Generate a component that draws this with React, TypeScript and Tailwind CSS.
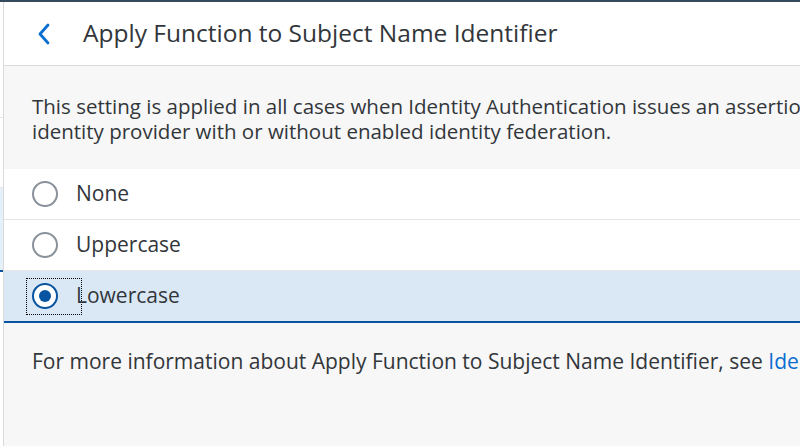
import React, { useState } from "react";

const options = ["None", "Uppercase", "Lowercase"];

function Radio({ checked }: { checked: boolean }) {
  return (
    <span
      className={`flex h-[26px] w-[26px] items-center justify-center rounded-full border-2 bg-white ${
        checked ? "border-[#0854a0]" : "border-[#89919a]"
      }`}
    >
      {checked && <span className="h-[12px] w-[12px] rounded-full bg-[#0854a0]" />}
    </span>
  );
}

export default function App() {
  const [value, setValue] = useState("Lowercase");

  return (
    <div
      className="flex h-[446px] w-[800px] flex-col overflow-hidden bg-[#f7f7f7] text-[#32363a]"
      style={{ fontFamily: '"Open Sans", Arial, sans-serif' }}
    >
      {/* Top shell bar */}
      <div className="h-[2px] w-full shrink-0 bg-[#354a5f]" />

      <div className="flex min-h-0 flex-1">
        {/* Previous column edge */}
        <div className="flex w-[4px] shrink-0 flex-col border-r border-[#d9d9d9] bg-white">
          <div className="h-[116px] border-b border-[#e5e5e5]" />
          <div className="h-[70px] border-b border-[#e5e5e5]" />
          <div className="h-[84px] border-b-2 border-[#0854a0] bg-[#e5f0fa]" />
          <div className="flex-1" />
        </div>

        <div className="flex min-w-0 flex-1 flex-col">
          {/* Header */}
          <div className="flex h-[64px] shrink-0 items-center border-b border-[#d9d9d9] bg-white">
            <button className="ml-[22px] flex h-[36px] w-[36px] items-center justify-center text-[#0a6ed1]">
              <svg width="14" height="22" viewBox="0 0 14 22" fill="none">
                <path d="M11 2 L3 11 L11 20" stroke="currentColor" strokeWidth="2.8" strokeLinecap="round" strokeLinejoin="round" />
              </svg>
            </button>
            <h1 className="ml-[21px] whitespace-nowrap text-[24.5px] text-[#32363a]">
              Apply Function to Subject Name Identifier
            </h1>
          </div>

          {/* Description */}
          <div className="whitespace-nowrap px-[28px] pt-[28px] pb-[25px] text-[20.5px] leading-[25px]">
            <p>This setting is applied in all cases when Identity Authentication issues an assertion for an</p>
            <p>identity provider with or without enabled identity federation.</p>
          </div>

          {/* Options */}
          <div className="flex flex-col bg-white">
            {options.map((opt) => {
              const checked = value === opt;
              return (
                <label
                  key={opt}
                  onClick={() => setValue(opt)}
                  className={`flex cursor-pointer items-center ${
                    checked
                      ? "h-[52px] border-b-2 border-[#0854a0] bg-[#dae8f5]"
                      : "h-[51px] border-b border-[#e5e5e5]"
                  }`}
                >
                  <span
                    className={`ml-[22px] flex h-[37px] w-[56px] items-center pl-[5px] ${
                      checked ? "border border-dotted border-black" : "border border-transparent"
                    }`}
                  >
                    <Radio checked={checked} />
                  </span>
                  <span className="ml-[-6px] text-[21px]">{opt}</span>
                </label>
              );
            })}
          </div>

          {/* Footer info */}
          <div className="whitespace-nowrap px-[28px] pt-[25px] text-[21px] leading-[26px]">
            For more information about Apply Function to Subject Name Identifier, see{" "}
            <a className="text-[#0a6ed1]">Identity Federation</a>
          </div>
        </div>
      </div>
    </div>
  );
}
